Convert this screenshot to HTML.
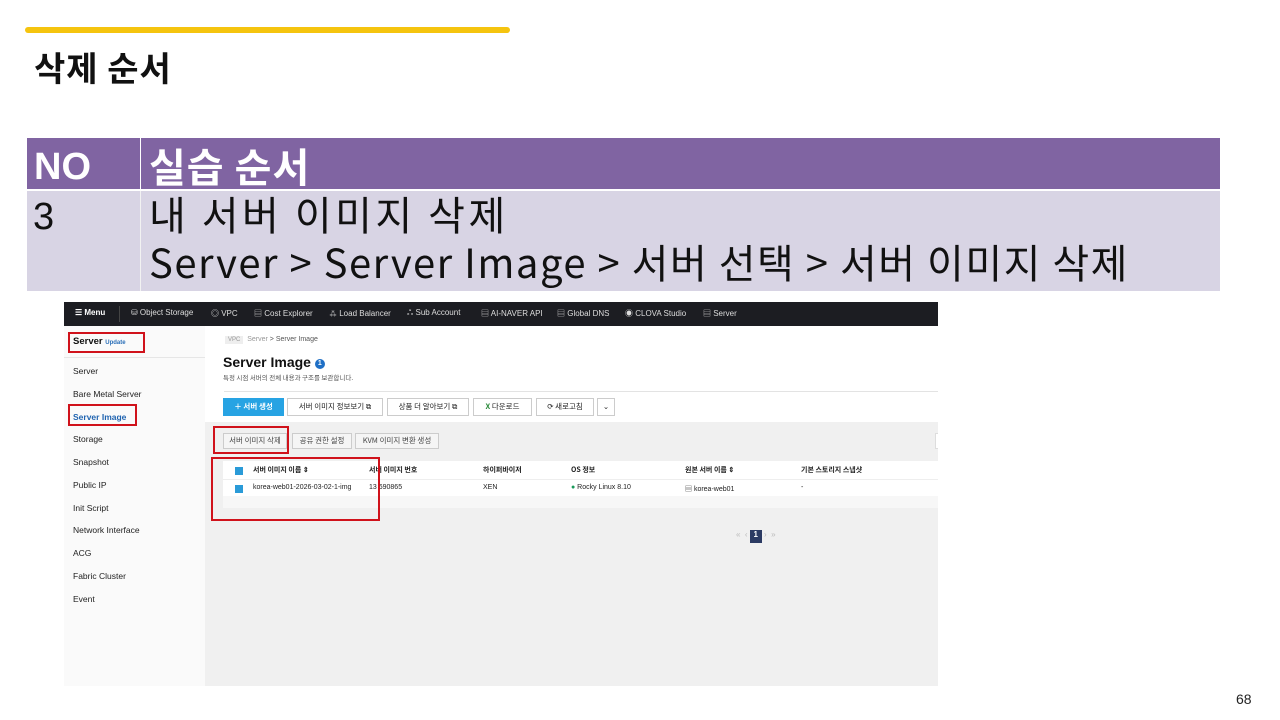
<!DOCTYPE html>
<html><head><meta charset="utf-8"><style>
*{margin:0;padding:0;box-sizing:border-box}
body{width:1280px;height:720px;background:#fff;position:relative;overflow:hidden;font-family:"Liberation Sans","Noto Sans CJK KR",sans-serif}
.a{position:absolute}
.k{font-family:"Noto Sans CJK KR","Liberation Sans",sans-serif}
.nav span{position:absolute;top:6px;font-size:8px;color:#ddd}
.side div{position:absolute;left:9px;font-size:8.5px;color:#222}
.btn{position:absolute;height:18px;border:1px solid #ccc;background:#fff;font-size:7.5px;color:#222;text-align:center;line-height:16px}
.red{position:absolute;border:2px solid #d0121b}
.th{position:absolute;font-size:7px;color:#222}
</style></head><body>
<div class="a" style="left:25px;top:27px;width:485px;height:6px;background:#f5c40f;border-radius:3px"></div>
<div class="a k" style="left:34px;top:42px;font-size:34px;font-weight:bold;color:#111;letter-spacing:1px">삭제 순서</div>

<div class="a" style="left:27px;top:138px;width:1193px;height:51px;background:#8064a2"></div>
<div class="a" style="left:140px;top:138px;width:1px;height:153px;background:#fff"></div>
<div class="a" style="left:27px;top:191px;width:1193px;height:100px;background:#d8d4e4"></div>
<div class="a k" style="left:140px;top:191px;width:1px;height:100px;background:#f2f2f2"></div>
<div class="a" style="left:34px;top:146px;font-size:38px;font-weight:bold;color:#fff">NO</div>
<div class="a k" style="left:149px;top:136px;font-size:40px;font-weight:bold;color:#fff;letter-spacing:1px">실습 순서</div>
<div class="a" style="left:33px;top:196px;font-size:38px;color:#111">3</div>
<div class="a k" style="left:149px;top:189px;font-size:40px;color:#111;line-height:48px;letter-spacing:1.5px;white-space:nowrap"><span style="letter-spacing:3.5px">내 서버 이미지 삭제</span><br>Server &gt; Server Image &gt; 서버 선택 &gt; 서버 이미지 삭제</div>

<!-- screenshot -->
<div class="a" style="left:64px;top:302px;width:874px;height:384px;background:#f0f0f0;overflow:hidden">
 <div class="a nav" style="left:0;top:0;width:874px;height:24px;background:#1c1d22">
  <span style="left:11px;color:#fff;font-weight:bold">☰ Menu</span>
  <div class="a" style="left:55px;top:4px;width:1px;height:16px;background:#444"></div>
  <span style="left:67px">⛁ Object Storage</span><span style="left:147px">◎ VPC</span>
  <span style="left:190px">▤ Cost Explorer</span><span style="left:265px">⁂ Load Balancer</span>
  <span style="left:343px">ஃ Sub Account</span><span style="left:417px">▤ AI-NAVER API</span>
  <span style="left:493px">▤ Global DNS</span><span style="left:561px">◉ CLOVA Studio</span>
  <span style="left:639px">▤ Server</span>
 </div>
 <div class="a side" style="left:0;top:24px;width:141px;height:360px;background:#fafafa">
  <div style="top:10px;font-size:9.5px;font-weight:bold;color:#111">Server <span style="font-size:6px;color:#2a6fb8">Update</span></div>
  <div class="a" style="left:0;top:31px;width:141px;height:1px;background:#e6e6e6"></div>
  <div style="top:40px">Server</div><div style="top:63px">Bare Metal Server</div>
  <div style="top:86px;color:#1f63b0;font-weight:bold">Server Image</div>
  <div style="top:108px">Storage</div><div style="top:131px">Snapshot</div>
  <div style="top:154px">Public IP</div><div style="top:177px">Init Script</div>
  <div style="top:199px">Network Interface</div><div style="top:222px">ACG</div>
  <div style="top:245px">Fabric Cluster</div><div style="top:268px">Event</div>
 </div>
 <div class="a" style="left:141px;top:24px;width:733px;height:96px;background:#fff"></div>
 <div class="a" style="left:160px;top:89px;width:714px;height:1px;background:#e3e3e3"></div>
 <div class="a" style="left:161px;top:34px;font-size:7px;color:#555"><span style="background:#eee;padding:1px 3px;color:#999;font-size:6px">VPC</span>&nbsp; <span style="color:#999">Server</span> &gt; Server Image</div>
 <div class="a" style="left:159px;top:52px;font-size:14px;font-weight:bold;color:#111">Server Image <span style="display:inline-block;width:10px;height:10px;border-radius:5px;background:#1f6fc5;color:#fff;font-size:7px;text-align:center;line-height:10px;vertical-align:2px">1</span></div>
 <div class="a k" style="left:159px;top:70px;font-size:6.5px;color:#555">특정 시점 서버의 전체 내용과 구조를 보관합니다.</div>
 <div class="btn k" style="left:159px;top:96px;width:61px;background:#27a3e3;border-color:#27a3e3;color:#fff;font-weight:bold">＋ 서버 생성</div>
 <div class="btn k" style="left:223px;top:96px;width:96px">서버 이미지 정보보기 ⧉</div>
 <div class="btn k" style="left:323px;top:96px;width:82px">상품 더 알아보기 ⧉</div>
 <div class="btn k" style="left:409px;top:96px;width:59px"><b style="color:#2a8a3a">X</b> 다운로드</div>
 <div class="btn k" style="left:472px;top:96px;width:58px">⟳ 새로고침</div>
 <div class="btn" style="left:533px;top:96px;width:18px">⌄</div>
 <div class="btn k" style="left:159px;top:131px;width:64px;background:#f5f5f5;height:16px;line-height:14px;color:#444">서버 이미지 삭제</div>
 <div class="btn k" style="left:228px;top:131px;width:60px;background:#f5f5f5;height:16px;line-height:14px;color:#444">공유 권한 설정</div>
 <div class="btn k" style="left:291px;top:131px;width:84px;background:#f5f5f5;height:16px;line-height:14px;color:#444">KVM 이미지 변환 생성</div>
 <div class="a" style="left:871px;top:131px;width:5px;height:16px;background:#fff;border:1px solid #ddd"></div>
 <div class="a" style="left:159px;top:159px;width:715px;height:47px;background:#fff"></div>
 <div class="a" style="left:159px;top:177px;width:715px;height:1px;background:#eee"></div>
 <div class="a" style="left:159px;top:194px;width:715px;height:12px;background:#f7f7f7"></div>
 <div class="a" style="left:171px;top:165px;width:8px;height:8px;background:#2a9bd8"></div>
 <div class="a" style="left:171px;top:183px;width:8px;height:8px;background:#2a9bd8"></div>
 <div class="th k" style="left:189px;top:163px;font-weight:bold">서버 이미지 이름 ⇕</div>
 <div class="th k" style="left:305px;top:163px;font-weight:bold">서버 이미지 번호</div>
 <div class="th k" style="left:419px;top:163px;font-weight:bold">하이퍼바이저</div>
 <div class="th k" style="left:507px;top:163px;font-weight:bold">OS 정보</div>
 <div class="th k" style="left:621px;top:163px;font-weight:bold">원본 서버 이름 ⇕</div>
 <div class="th k" style="left:737px;top:163px;font-weight:bold">기본 스토리지 스냅샷</div>
 <div class="th" style="left:189px;top:182px">korea-web01-2026-03-02-1-img</div>
 <div class="th" style="left:305px;top:182px">13 690865</div>
 <div class="th" style="left:419px;top:182px">XEN</div>
 <div class="th" style="left:507px;top:182px"><span style="color:#1a9a5a">●</span> Rocky Linux 8.10</div>
 <div class="th" style="left:621px;top:182px">▤ korea-web01</div>
 <div class="th" style="left:737px;top:182px">-</div>
 <div class="a" style="left:672px;top:228px;font-size:8px;color:#bbb">«&nbsp; ‹ <span style="display:inline-block;width:12px;height:13px;background:#2c3b63;color:#fff;text-align:center;font-weight:bold">1</span> ›&nbsp; »</div>
</div>
<div class="red" style="left:68px;top:332px;width:77px;height:21px"></div>
<div class="red" style="left:68px;top:404px;width:69px;height:22px"></div>
<div class="red" style="left:213px;top:426px;width:76px;height:28px"></div>
<div class="red" style="left:211px;top:457px;width:169px;height:64px"></div>
<div class="a" style="left:1236px;top:691px;font-size:14px;color:#222">68</div>
</body></html>
